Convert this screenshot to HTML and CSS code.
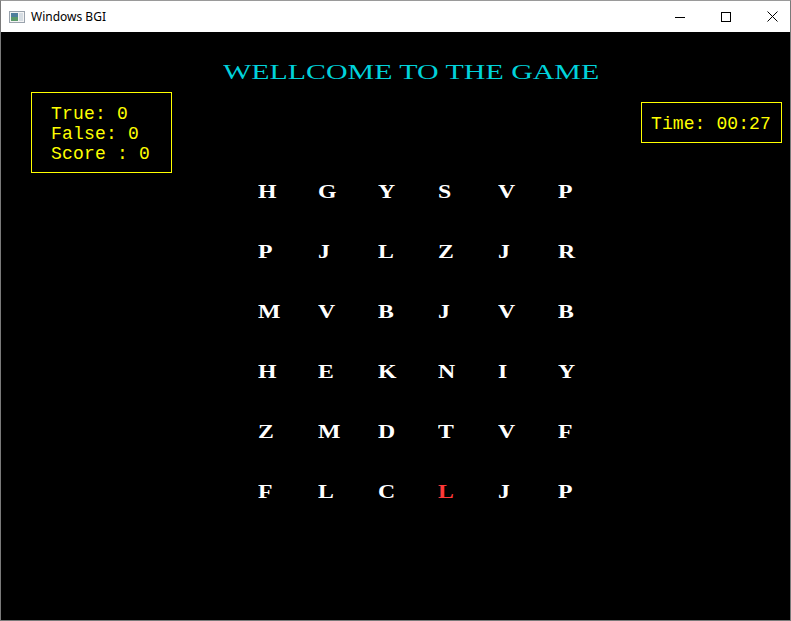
FILE: index.html
```html
<!DOCTYPE html>
<html>
<head>
<meta charset="utf-8">
<title>Windows BGI</title>
<link rel="stylesheet" href="styles.css">
</head>
<body>
<div class="window">
  <div class="titlebar">
    <svg class="app-icon" width="16" height="12" viewBox="0 0 16 12">
      <rect x="0.5" y="0.5" width="15" height="11" fill="#f4f4f4" stroke="#9aa3ad"/>
      <rect x="2" y="2" width="7" height="8" fill="#4f7f9c"/>
      <rect x="2" y="6" width="7" height="4" fill="#5b9a6a"/>
      <rect x="10" y="2" width="4" height="8" fill="#d6dde3"/>
    </svg>
    <span class="title">Windows BGI</span>
    <div class="controls">
      <div class="ctl"><svg width="10" height="10" viewBox="0 0 10 10"><path d="M0 5.5H10" stroke="#000" stroke-width="1"/></svg></div>
      <div class="ctl"><svg width="10" height="10" viewBox="0 0 10 10"><rect x="0.5" y="0.5" width="9" height="9" fill="none" stroke="#000" stroke-width="1"/></svg></div>
      <div class="ctl"><svg width="11" height="11" viewBox="0 0 11 11"><path d="M0.5 0.5L10.5 10.5M10.5 0.5L0.5 10.5" stroke="#000" stroke-width="1"/></svg></div>
    </div>
  </div>
  <div class="canvas">
    <h1 class="heading">WELLCOME TO THE GAME</h1>
    <div class="main">
      <div class="panel score">
        <div>True: 0</div>
        <div>False: 0</div>
        <div>Score : 0</div>
      </div>
      <div class="board">
        <span>H</span><span>G</span><span>Y</span><span>S</span><span>V</span><span>P</span>
        <span>P</span><span>J</span><span>L</span><span>Z</span><span>J</span><span>R</span>
        <span>M</span><span>V</span><span>B</span><span>J</span><span>V</span><span>B</span>
        <span>H</span><span>E</span><span>K</span><span>N</span><span>I</span><span>Y</span>
        <span>Z</span><span>M</span><span>D</span><span>T</span><span>V</span><span>F</span>
        <span>F</span><span>L</span><span>C</span><span class="hit">L</span><span>J</span><span>P</span>
      </div>
      <div class="panel time">Time: 00:27</div>
    </div>
  </div>
</div>
</body>
</html>
```
FILE: styles.css
```css
html, body {
  margin: 0;
  padding: 0;
  background: #000;
}
.window {
  width: 791px;
  height: 621px;
  box-sizing: border-box;
  border: 1px solid #7a7a7a;
  border-top-color: #9a9a9a;
  display: flex;
  flex-direction: column;
  overflow: hidden;
  background: #000;
}
.titlebar {
  height: 31px;
  flex: none;
  background: #fff;
  display: flex;
  align-items: center;
  font-family: "Noto Sans", "Open Sans", sans-serif;
  font-size: 12px;
  color: #000;
}
.app-icon {
  margin-left: 8px;
  margin-top: 1px;
}
.title {
  margin-left: 6px;
  margin-top: -1px;
}
.controls {
  margin-left: auto;
  display: flex;
  margin-right: -5px;
  height: 100%;
}
.ctl {
  width: 46px;
  height: 100%;
  display: flex;
  align-items: center;
  justify-content: center;
}
.canvas {
  flex: 1;
  background: #000;
  padding-top: 30px;
}
.heading {
  margin: 0 0 0 222px;
  width: max-content;
  font-family: "Liberation Serif", "Times New Roman", serif;
  font-weight: normal;
  font-size: 20px;
  line-height: 20px;
  color: #00d2da;
  transform: scaleX(1.495);
  transform-origin: 0 0;
  white-space: nowrap;
}
.main {
  display: flex;
  align-items: flex-start;
  padding: 0 8px 0 30px;
  margin-top: 10px;
}
.panel {
  border: 1px solid #ffff00;
  color: #ffff00;
  font-family: "Liberation Mono", "Courier New", monospace;
  font-size: 18px;
  line-height: 20px;
  letter-spacing: 0.2px;
  box-sizing: border-box;
  white-space: nowrap;
}
.score {
  width: 141px;
  height: 81px;
  padding: 11px 0 0 19px;
}
.time {
  margin-left: auto;
  margin-top: 10px;
  width: 141px;
  height: 41px;
  padding: 11px 0 0 9px;
  letter-spacing: 0.1px;
}
.board {
  margin-left: 86px;
  margin-top: 70px;
  display: grid;
  grid-template-columns: repeat(6, 60px);
  grid-auto-rows: 60px;
  font-family: "Liberation Serif", "Times New Roman", serif;
  font-weight: bold;
  font-size: 19px;
  line-height: 60px;
  color: #fff;
}
.board span {
  display: block;
  transform: scaleX(1.25);
  transform-origin: 0 0;
}
.board .hit {
  color: #ff3838;
}
```
